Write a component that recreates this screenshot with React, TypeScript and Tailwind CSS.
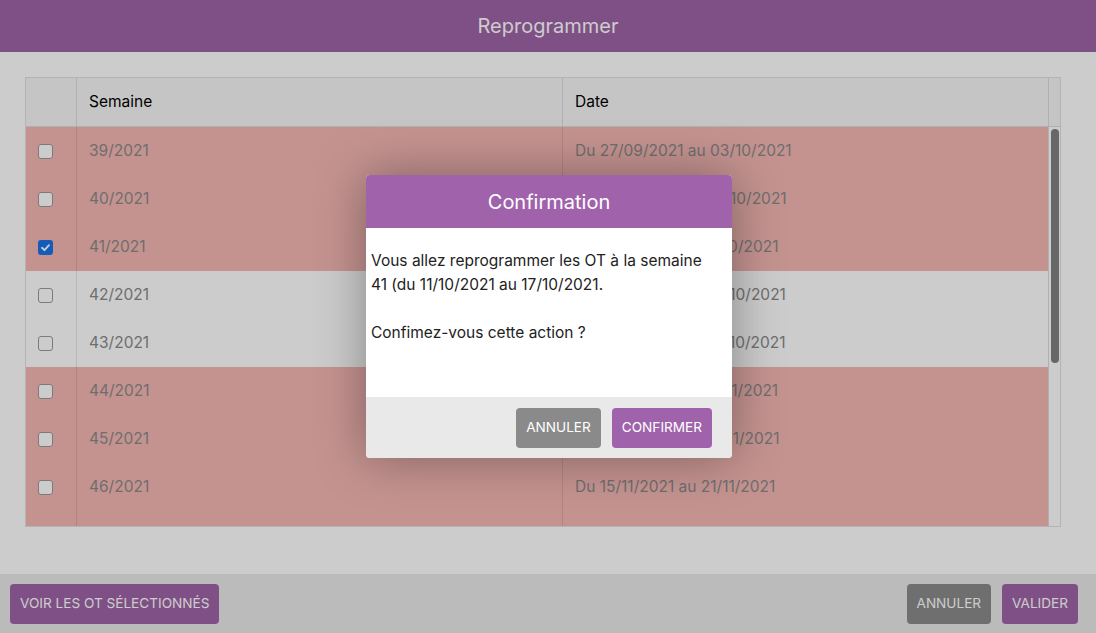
import React from "react";

const rows = [
  { w: "39/2021", d: "Du 27/09/2021 au 03/10/2021", red: true, checked: false },
  { w: "40/2021", d: "Du 04/10/2021 au 10/10/2021", red: true, checked: false },
  { w: "41/2021", d: "Du 11/10/2021 au 17/10/2021", red: true, checked: true },
  { w: "42/2021", d: "Du 18/10/2021 au 24/10/2021", red: false, checked: false },
  { w: "43/2021", d: "Du 25/10/2021 au 31/10/2021", red: false, checked: false },
  { w: "44/2021", d: "Du 01/11/2021 au 07/11/2021", red: true, checked: false },
  { w: "45/2021", d: "Du 08/11/2021 au 14/11/2021", red: true, checked: false },
  { w: "46/2021", d: "Du 15/11/2021 au 21/11/2021", red: true, checked: false },
  { w: "47/2021", d: "Du 22/11/2021 au 28/11/2021", red: true, checked: false },
];

function Check({ checked }: { checked: boolean }) {
  if (checked) {
    return (
      <span className="flex h-[15px] w-[15px] items-center justify-center rounded-[3px] bg-[#1a73e8]">
        <svg width="11" height="11" viewBox="0 0 12 12" fill="none">
          <path d="M2.2 6.3 L4.9 8.9 L9.8 3.4" stroke="white" strokeWidth="2" strokeLinecap="round" strokeLinejoin="round" />
        </svg>
      </span>
    );
  }
  return <span className="block h-[15px] w-[15px] rounded-[3px] border border-[#9a9a9a] bg-white" />;
}

export default function App() {
  return (
    <div
      className="relative flex h-[633px] w-[1096px] flex-col overflow-hidden bg-white"
      style={{ fontFamily: "Inter, 'Liberation Sans', Arial, sans-serif" }}
    >
      <div className="flex h-[52px] shrink-0 items-center justify-center bg-[#9f64a8] text-[20px] text-white">
        Reprogrammer
      </div>
      <div className="flex-1 px-[25px] pt-[25px]">
        <div className="flex h-[450px] w-[1036px] flex-col border border-[#e2e2e2]">
          <div className="flex h-[49px] shrink-0 border-b border-[#dcdcdc] bg-[#f7f7f7] text-[15.5px] text-black">
            <div className="w-[51px] border-r border-[#dcdcdc]" />
            <div className="flex w-[486px] items-center border-r border-[#dcdcdc] pl-[12px]">Semaine</div>
            <div className="flex w-[486px] items-center border-r border-[#dcdcdc] pl-[12px]">Date</div>
            <div className="flex-1" />
          </div>
          <div className="flex min-h-0 flex-1">
            <div className="w-[1022px] shrink-0 overflow-hidden">
              {rows.map((r) => (
                <div
                  key={r.w}
                  className={`flex h-[48px] text-[15.5px] text-[#8a8a8a] ${r.red ? "bg-[#f6b8b4]" : "bg-white"}`}
                >
                  <div className="flex w-[51px] shrink-0 items-center border-r border-black/10 pl-[12px]">
                    <Check checked={r.checked} />
                  </div>
                  <div className="flex w-[486px] shrink-0 items-center border-r border-black/10 pl-[12px]">{r.w}</div>
                  <div className="flex w-[485px] shrink-0 items-center pl-[12px]">{r.d}</div>
                </div>
              ))}
            </div>
            <div className="flex-1 border-l border-[#dcdcdc] px-[2px] pt-[2px]">
              <div className="h-[234px] w-[8px] rounded-full bg-[#818181]" />
            </div>
          </div>
        </div>
      </div>
      <div className="flex h-[59px] shrink-0 items-center justify-between bg-[#eaeaea] px-[10px]">
        <button className="h-[40px] rounded-[4px] bg-[#9f64a8] px-[10px] text-[13.6px] text-white">
          VOIR LES OT SÉLECTIONNÉS
        </button>
        <div className="flex gap-[11px] pr-[8px]">
          <button className="h-[40px] rounded-[4px] bg-[#8b8b8b] px-[10px] text-[13.6px] text-white">ANNULER</button>
          <button className="h-[40px] rounded-[4px] bg-[#9f64a8] px-[10px] text-[13.6px] text-white">VALIDER</button>
        </div>
      </div>

      <div className="absolute inset-0 bg-black/20" />

      <div className="absolute left-[366px] top-[175px] flex w-[366px] flex-col overflow-hidden rounded-[4px] bg-white shadow-[0_0_50px_rgba(0,0,0,0.35)]">
        <div className="flex h-[53px] items-center justify-center bg-[#a063ab] text-[20px] text-white">Confirmation</div>
        <div className="h-[169px] px-[5px] pt-[21px] text-[15.5px] leading-[24px] text-[#222]">
          <p>
            Vous allez reprogrammer les OT à la semaine
            <br />
            41 (du 11/10/2021 au 17/10/2021.
          </p>
          <p className="mt-[24px]">Confimez-vous cette action ?</p>
        </div>
        <div className="flex h-[61px] items-center justify-end gap-[11px] bg-[#e9e9e9] pr-[20px]">
          <button className="h-[40px] rounded-[4px] bg-[#8a8a8a] px-[10px] text-[13.6px] text-white">ANNULER</button>
          <button className="h-[40px] rounded-[4px] bg-[#a063ab] px-[10px] text-[13.6px] text-white">CONFIRMER</button>
        </div>
      </div>
    </div>
  );
}
